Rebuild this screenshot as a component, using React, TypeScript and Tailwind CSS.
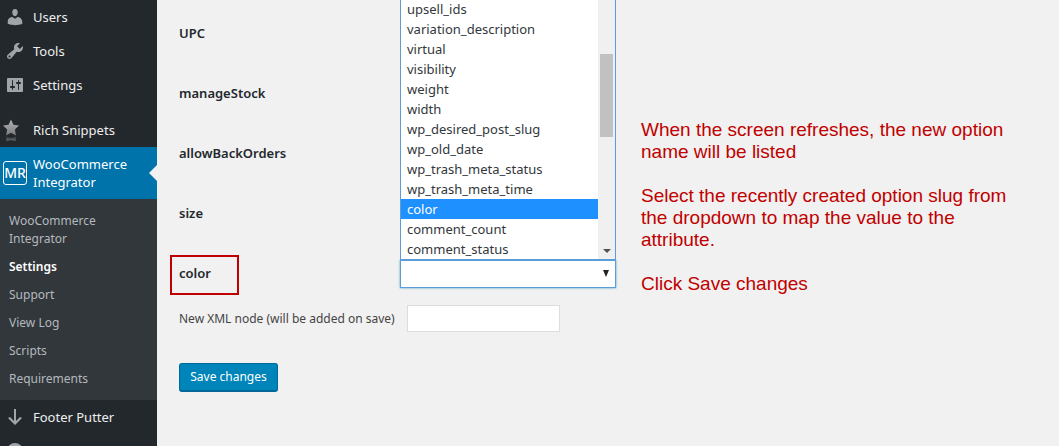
import type { ReactNode } from "react";

const OPTIONS = [
  "upsell_ids",
  "variation_description",
  "virtual",
  "visibility",
  "weight",
  "width",
  "wp_desired_post_slug",
  "wp_old_date",
  "wp_trash_meta_status",
  "wp_trash_meta_time",
  "color",
  "comment_count",
  "comment_status",
];

const FIELDS = ["UPC", "manageStock", "allowBackOrders", "size"];

const SUBMENU = [
  "WooCommerce Integrator",
  "Settings",
  "Support",
  "View Log",
  "Scripts",
  "Requirements",
];

const Dashicon = ({ d }: { d: string }) => (
  <svg viewBox="0 0 20 20" className="size-5 fill-[#a0a5aa]" aria-hidden="true">
    <path d={d} />
  </svg>
);

const StarIcon = () => (
  <svg viewBox="0 0 30 24" className="h-6 w-[30px]" aria-hidden="true">
    <defs>
      <linearGradient id="star" x1="0" y1="0" x2="0" y2="1">
        <stop offset="0" stopColor="#b4b4b4" />
        <stop offset="1" stopColor="#77797b" />
      </linearGradient>
      <linearGradient id="reflection" x1="0" y1="0" x2="0" y2="1">
        <stop offset="0" stopColor="#34383c" />
        <stop offset="1" stopColor="#676a6d" />
      </linearGradient>
    </defs>
    <path
      fill="url(#star)"
      d="M11 1.5l2.4 5.3 5.6.8-4.1 4 1 6-4.9-2.9-4.9 2.9 1-6L3 7.6l5.6-.8z"
    />
    <path fill="url(#reflection)" d="M6 18.5q5 2.4 10 0l-.4 4.5q-4.6-1.6-9.2 0z" />
  </svg>
);

const MenuItem = ({ icon, label }: { icon: ReactNode; label: string }) => (
  <li>
    <a href="#" className="flex h-[34px] items-center gap-[3px] text-[#eee]">
      <span className="flex w-[30px] shrink-0 justify-center">{icon}</span>
      {label}
    </a>
  </li>
);

const Sidebar = () => (
  <nav className="w-[157px] shrink-0 bg-[#23282d] text-[13px] leading-[18px]">
    <ul>
      <MenuItem
        label="Users"
        icon={
          <Dashicon d="M10 9.25c-2.27 0-2.73-3.44-2.73-3.44C7 4.02 7.82 2 9.97 2c2.16 0 2.98 2.02 2.71 3.81 0 0-.41 3.44-2.68 3.44zm0 2.57L12.72 10c2.39 0 4.52 2.33 4.52 4.53v2.49s-3.65 1.13-7.24 1.13c-3.65 0-7.24-1.13-7.24-1.13v-2.49c0-2.25 1.94-4.48 4.47-4.48z" />
        }
      />
      <MenuItem
        label="Tools"
        icon={
          <Dashicon d="M16.68 9.77c-1.34 1.34-3.3 1.67-4.95.99l-5.41 6.52c-.99.99-2.59.99-3.58 0s-.99-2.59 0-3.57l6.52-5.42c-.68-1.65-.35-3.61.99-4.95 1.28-1.28 3.12-1.62 4.72-1.06l-2.89 2.89 2.82 2.82 2.86-2.87c.53 1.58.18 3.39-1.08 4.65zM3.81 16.21c.4.39 1.04.39 1.43 0 .4-.4.4-1.04 0-1.43-.39-.4-1.03-.4-1.43 0-.39.39-.39 1.03 0 1.43z" />
        }
      />
      <MenuItem
        label="Settings"
        icon={
          <Dashicon d="M18 16V4c0-.55-.45-1-1-1H3c-.55 0-1 .45-1 1v12c0 .55.45 1 1 1h14c.55 0 1-.45 1-1zM8 11h1c.55 0 1 .45 1 1s-.45 1-1 1H8v1.5c0 .28-.22.5-.5.5s-.5-.22-.5-.5V13H6c-.55 0-1-.45-1-1s.45-1 1-1h1V5.5c0-.28.22-.5.5-.5s.5.22.5.5V11zm5-2h-1c-.55 0-1-.45-1-1s.45-1 1-1h1V5.5c0-.28.22-.5.5-.5s.5.22.5.5V7h1c.55 0 1 .45 1 1s-.45 1-1 1h-1v5.5c0 .28-.22.5-.5.5s-.5-.22-.5-.5V9z" />
        }
      />
    </ul>

    <ul className="mt-[11px]">
      <MenuItem label="Rich Snippets" icon={<StarIcon />} />
      <li>
        <a
          href="#"
          className="relative flex h-[52px] items-center gap-[3px] bg-[#0073aa] text-white"
        >
          <span className="flex w-[30px] shrink-0 justify-center">
            <span className="flex size-6 items-center justify-center rounded-[3px] border border-white text-sm font-medium">
              MR
            </span>
          </span>
          WooCommerce Integrator
          {/* notch pointing at the current page */}
          <svg
            viewBox="0 0 8 16"
            className="absolute top-[18px] right-0 h-4 w-2 fill-[#f1f1f1]"
            aria-hidden="true"
          >
            <path d="M8 0v16L0 8z" />
          </svg>
        </a>
        <ul className="bg-[#32373c] pt-2 pb-[7px] text-xs leading-[18px]">
          {SUBMENU.map((item) => (
            <li key={item}>
              <a
                href="#"
                className={
                  item === "Settings"
                    ? "block px-[9px] py-[5px] font-semibold text-white"
                    : "block py-[5px] pr-10 pl-[9px] text-[#b4b9be]"
                }
              >
                {item}
              </a>
            </li>
          ))}
        </ul>
      </li>
      <MenuItem
        label="Footer Putter"
        icon={<Dashicon d="M9 2h2v12l4-4 2 1-7 7-7-7 2-1 4 4V2z" />}
      />
      <MenuItem
        label=""
        icon={<Dashicon d="M10 2a8 8 0 1 0 0 16 8 8 0 0 0 0-16z" />}
      />
    </ul>
  </nav>
);

const OptionList = () => (
  <div className="absolute bottom-full left-0 z-10 flex w-full border border-[#5b9dd9] bg-white">
    <ul role="listbox" aria-label="color options" className="flex-1">
      {OPTIONS.map((name) => (
        <li
          key={name}
          role="option"
          aria-selected={name === "color"}
          className={
            name === "color"
              ? "h-5 bg-[#1e90ff] px-1.5 leading-5 text-white"
              : "h-5 px-1.5 leading-5 text-[#32373c]"
          }
        >
          {name}
        </li>
      ))}
    </ul>
    <div className="flex w-[17px] flex-col items-center justify-between bg-[#f0f0f0] pt-[55px] pb-1.5">
      <div className="h-[83px] w-[13px] bg-[#c1c1c1]" />
      <svg viewBox="0 0 8 4" className="h-1 w-2 fill-[#505050]" aria-hidden="true">
        <path d="M0 0h8L4 4z" />
      </svg>
    </div>
  </div>
);

const Field = ({ name, open }: { name: string; open?: boolean }) => (
  <div className="flex h-[60px] items-center">
    <div className="w-[221px]">
      <label htmlFor={name} className="relative font-semibold text-[#23282d]">
        {name}
        {open && (
          <span className="absolute -top-[9px] -left-[9px] h-10 w-[69px] border-2 border-[#c00000]" />
        )}
      </label>
    </div>
    <div className="relative w-[216px]">
      <select
        id={name}
        className={
          open
            ? "block h-7 w-full appearance-none border border-[#5b9dd9] bg-white shadow-[0_0_2px_rgba(30,140,190,0.8)]"
            : "block h-7 w-full appearance-none border border-[#ddd] bg-white"
        }
      >
        <option value=""></option>
      </select>
      <svg
        viewBox="0 0 6 7"
        className="pointer-events-none absolute top-[10px] right-[7px] h-[7px] w-1.5 fill-[#222]"
        aria-hidden="true"
      >
        <path d="M0 0h6L3 7z" />
      </svg>
      {open && <OptionList />}
    </div>
  </div>
);

const SettingsForm = () => (
  <form className="w-[462px] shrink-0 pt-1" onSubmit={(e) => e.preventDefault()}>
    {FIELDS.map((name) => (
      <Field key={name} name={name} />
    ))}
    <Field name="color" open />

    <div className="mt-px flex items-center gap-1">
      <label htmlFor="new-node" className="w-56 whitespace-nowrap text-xs text-[#444]">
        New XML node (will be added on save)
      </label>
      <input
        id="new-node"
        type="text"
        className="h-[27px] w-[153px] border border-[#ddd] bg-white px-1"
      />
    </div>

    <button
      type="submit"
      className="mt-[31px] h-[29px] w-[99px] rounded-[3px] border border-b-2 border-[#006799] bg-[#0085ba] text-xs text-white"
    >
      Save changes
    </button>
  </form>
);

export default function App() {
  return (
    <div className="flex h-screen overflow-hidden bg-[#f1f1f1] font-['Noto_Sans','Open_Sans',sans-serif] text-[13px]">
      <Sidebar />
      <main className="flex flex-1 pl-[22px]">
        <SettingsForm />
        <aside className="max-w-[370px] space-y-[22px] pt-[119px] font-['Liberation_Sans',Arial,sans-serif] text-[19px] leading-[22px] text-[#c00000]">
          <p>When the screen refreshes, the new option name will be listed</p>
          <p>
            Select the recently created option slug from the dropdown to map the
            value to the attribute.
          </p>
          <p>Click Save changes</p>
        </aside>
      </main>
    </div>
  );
}
